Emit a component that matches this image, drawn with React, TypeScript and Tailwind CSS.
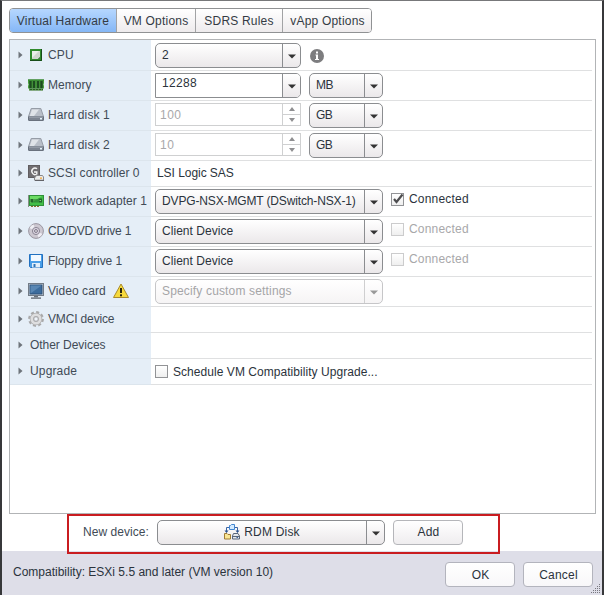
import type { ReactNode } from 'react'
import clsx from 'clsx'

const tabs = [
  { label: 'Virtual Hardware', width: 'w-[107px]', active: true },
  { label: 'VM Options', width: 'w-[79px]' },
  { label: 'SDRS Rules', width: 'w-[87px]' },
  { label: 'vApp Options', width: 'w-[89px]' },
]

function Arrow({ faded }: { faded?: boolean }) {
  return (
    <svg width="8" height="5" viewBox="0 0 8 5" className="block">
      <path d="M0 0.5H8L4 4.5Z" fill={faded ? '#999999' : '#333333'} />
    </svg>
  )
}

function Select({
  children,
  width,
  disabled,
  center,
}: {
  children: ReactNode
  width: string
  disabled?: boolean
  center?: boolean
}) {
  return (
    <div
      className={clsx(
        'flex h-[25px] shrink-0 rounded-[5px] border bg-linear-to-b',
        width,
        disabled
          ? 'border-[#c6c6c8] from-white to-[#f6f4f5] text-[#a5a5a7]'
          : 'border-[#8b8d90] from-white to-[#ebe8ea] text-[#2b333c]'
      )}
    >
      <div className={clsx('flex flex-1 items-center pb-[2px] whitespace-nowrap', center ? 'justify-center gap-1' : 'pl-[6px]')}>
        {children}
      </div>
      <div
        className={clsx(
          'flex w-[18px] items-center justify-center border-l pt-px',
          disabled ? 'border-[#cfcfd0]' : 'border-[#8b8d90]'
        )}
      >
        <Arrow faded={disabled} />
      </div>
    </div>
  )
}

function Spinner({ value }: { value: string }) {
  return (
    <div className="mb-[2px] flex h-[23px] w-[146px] border border-[#cfd0d1] text-[#a8a8aa]">
      <div className="flex flex-1 items-center pl-[4px] tracking-[0.5px]">{value}</div>
      <div className="flex w-[18px] flex-col border-l border-[#cfd0d1]">
        <div className="flex h-[10px] items-center justify-center">
          <svg width="6" height="4" viewBox="0 0 6 4">
            <path d="M0 4H6L3 0Z" fill="#8f8f91" />
          </svg>
        </div>
        <div className="flex h-[11px] items-center justify-center border-t border-[#cfd0d1]">
          <svg width="6" height="4" viewBox="0 0 6 4">
            <path d="M0 0H6L3 4Z" fill="#8f8f91" />
          </svg>
        </div>
      </div>
    </div>
  )
}

function Checkbox({ label, checked, disabled }: { label: ReactNode; checked?: boolean; disabled?: boolean }) {
  return (
    <div className={clsx('flex items-center gap-[5px]', disabled ? 'text-[#a8a8aa]' : 'text-[#2b333c]')}>
      <div
        className={clsx(
          'h-[13px] w-[13px] border bg-linear-to-b from-white to-[#efefef]',
          disabled ? 'border-[#cccccd]' : 'border-[#929396]'
        )}
      >
        {checked && (
          <svg width="12" height="11" viewBox="0 0 12 11" className="block overflow-visible">
            <path d="M2 5L4.5 8L10.5 0.5" fill="none" stroke="#4d4d4f" strokeWidth="2.2" />
          </svg>
        )}
      </div>
      <span className="whitespace-nowrap">{label}</span>
    </div>
  )
}

function Button({ label, light }: { label: string; light?: boolean }) {
  return (
    <button
      className={clsx(
        'flex h-[25px] w-[70px] items-center justify-center rounded-[4px] border bg-linear-to-b from-white tracking-[0.2px] text-[#2b333c]',
        light ? 'border-[#b3b4bd] to-[#f8f7f9] pl-px' : 'border-[#b5b6ba] to-[#efedef] pb-px pl-px'
      )}
    >
      {label}
    </button>
  )
}

function CpuIcon() {
  return (
    <svg width="16" height="16" viewBox="0 0 16 16" className="block">
      <rect x="2" y="2" width="12" height="12" fill="#2f8a2c" />
      <path d="M13.5 2V13.5H2" fill="none" stroke="#174d19" />
      <path d="M4 4H12V10L10 12H4Z" fill="#cfd6ce" />
      <path d="M4 11V4H11Z" fill="#eaeeea" />
      <path d="M12 10V12H10Z" fill="#43794a" />
    </svg>
  )
}

function MemoryIcon() {
  return (
    <svg width="16" height="16" viewBox="0 0 16 16" className="block">
      <path d="M0 2.5H16V6L15.5 7.5L16 9V11.5H0V9L0.5 7.5L0 6Z" fill="#4aa03e" />
      <path d="M0 3H16" stroke="#2d7a2a" />
      <path d="M2.5 4V11M6 4V11M10 4V11M13.5 4V11" stroke="#1d4c20" strokeWidth="2.4" />
      <path d="M1 12.5H15" stroke="#23601f" strokeWidth="2" />
      <path d="M1 13H15" stroke="#8fbd6a" strokeDasharray="1 2" />
    </svg>
  )
}

function DiskIcon() {
  return (
    <svg width="16" height="16" viewBox="0 0 16 16" className="block">
      <path d="M3.2 1.5H12.8L15.5 9.5H0.5Z" fill="#b9bfc8" stroke="#969da7" />
      <path d="M4 2.5H11L6 9H1.8Z" fill="#dfe3e8" />
      <rect x="0.5" y="9.5" width="15" height="4" rx="0.5" fill="#7d8591" stroke="#69717d" />
      <path d="M1 10H15" stroke="#a9b0ba" />
      <rect x="12" y="11" width="2" height="1.5" fill="#e6f5fc" />
    </svg>
  )
}

function ScsiIcon() {
  return (
    <svg width="16" height="16" viewBox="0 0 16 16" className="block">
      <rect x="0.5" y="0.5" width="11" height="12" fill="#716e71" stroke="#605d60" />
      <path d="M9 3.8A3.2 3.2 0 1 0 8.8 9V7H6" fill="none" stroke="#f4f4f4" strokeWidth="1.4" />
      <path d="M8.5 10.5H14.5L15.5 12V15.2H6.5V13Z" fill="#ececec" stroke="#88888b" />
      <path d="M7 15.5H16" stroke="#636368" />
      <rect x="12" y="12.5" width="2" height="1.2" fill="#f2a12c" />
    </svg>
  )
}

function NetworkIcon() {
  return (
    <svg width="16" height="16" viewBox="0 0 16 16" className="block">
      <rect x="1.5" y="2.5" width="14" height="10" fill="#43be48" stroke="#2f9139" />
      <path d="M2 3H14L3 10H2Z" fill="#6cdb65" />
      <path d="M0.5 2V14" stroke="#868e86" />
      <path d="M3 13.5H12" stroke="#86712c" strokeDasharray="2 1" />
      <rect x="2.5" y="6" width="3" height="3.5" fill="#23662c" />
      <path d="M7 6V9.5M9 6V9.5" stroke="#23662c" />
      <rect x="10.5" y="5.5" width="3.5" height="4" fill="#23662c" />
      <path d="M11.5 7.5H13" stroke="#80d77c" />
    </svg>
  )
}

function CdIcon() {
  return (
    <svg width="16" height="16" viewBox="0 0 16 16" className="block">
      <circle cx="8" cy="8" r="7.4" fill="#cdc8d1" stroke="#9a96a1" />
      <path d="M8 8L1.5 5A7 7 0 0 1 5.5 1.6Z" fill="#efeff4" />
      <path d="M8 8L14.5 11A7 7 0 0 1 10.5 14.4Z" fill="#efedf4" />
      <circle cx="8" cy="8" r="3.6" fill="#d9d3df" stroke="#8d8795" />
      <circle cx="8" cy="8" r="1.4" fill="#f7f7f9" stroke="#756d7e" />
    </svg>
  )
}

function FloppyIcon() {
  return (
    <svg width="16" height="16" viewBox="0 0 16 16" className="block">
      <path d="M1.5 1.5H14.5V14.5H2.5L1.5 13.5Z" fill="#4a9fe8" stroke="#2271c0" />
      <rect x="3" y="2" width="10" height="6" fill="#f2f9ff" />
      <rect x="4" y="10" width="8" height="4.5" fill="#e2effa" />
      <rect x="5.5" y="11" width="2" height="3" fill="#2c73b5" />
    </svg>
  )
}

function VideoIcon() {
  return (
    <svg width="16" height="16" viewBox="0 0 16 16" className="block">
      <rect x="0.5" y="0.5" width="15" height="12" fill="#ccd3db" stroke="#737c87" />
      <rect x="2" y="2" width="12" height="9" fill="#3c6c9d" stroke="#2c5079" />
      <path d="M2.5 10.5V2.5H13.5Z" fill="#5987b4" />
      <rect x="6" y="13" width="4" height="1.5" fill="#69727c" />
      <rect x="3" y="14.3" width="10" height="1.7" fill="#7d858f" />
    </svg>
  )
}

function GearIcon() {
  return (
    <svg width="16" height="16" viewBox="0 0 16 16" className="block">
      <circle cx="8" cy="8" r="6.6" fill="none" stroke="#a8a8a9" strokeWidth="2.6" strokeDasharray="2.9 2.28" />
      <circle cx="8" cy="8" r="4.2" fill="none" stroke="#b0b0b1" strokeWidth="4.2" />
      <circle cx="8" cy="8" r="4.2" fill="none" stroke="#dededf" strokeWidth="2.6" />
      <circle cx="8" cy="8" r="2.2" fill="#eef3f9" stroke="#a0a0a2" strokeWidth="0.8" />
    </svg>
  )
}

function WarningIcon() {
  return (
    <svg width="16" height="16" viewBox="0 0 16 16" className="block">
      <path d="M8 1L15.5 14.5H0.5Z" fill="#f7da3c" stroke="#a98b2c" strokeLinejoin="round" />
      <path d="M8 5V10" stroke="#2b270d" strokeWidth="2" />
      <rect x="7" y="11.3" width="2" height="2" fill="#2b270d" />
    </svg>
  )
}

function RdmIcon() {
  return (
    <svg width="16" height="16" viewBox="0 0 16 16" className="block">
      <path d="M5 3.5H2.5V8M11 3.5H13.5V8" fill="none" stroke="#3965a5" />
      <path d="M0.5 6.5H4.5L2.5 9ZM11.5 6.5H15.5L13.5 9Z" fill="#2a508c" />
      <path d="M5.5 1.5H6.5L7.5 0.5H10.5V5.5H5.5Z" fill="#d5ebff" stroke="#4387d2" />
      <path d="M0.5 9.5H3L4 10.5H6.5V15H0.5Z" fill="#fae694" stroke="#a17c34" />
      <path d="M9.5 9.5H14L15.5 12V15H8.5V12Z" fill="#e3e7ec" stroke="#59657a" />
      <path d="M9 12.5H15" stroke="#59657a" />
      <rect x="12.5" y="13" width="1.5" height="1" fill="#3965a5" />
    </svg>
  )
}

function InfoIcon() {
  return (
    <svg width="14" height="14" viewBox="0 0 14 14" className="block">
      <circle cx="7" cy="7" r="7" fill="#7d7d7f" />
      <path d="M5.5 5.5H8V10H9V11H5V10H6V6.5H5.5Z" fill="#ffffff" />
      <rect x="6" y="2.5" width="2" height="2" fill="#ffffff" />
    </svg>
  )
}

function Row({
  label,
  icon,
  extra,
  height,
  first,
  tracking,
  children,
}: {
  label: string
  icon?: ReactNode
  extra?: ReactNode
  height: string
  first?: boolean
  tracking?: string
  children?: ReactNode
}) {
  return (
    <div className={clsx('flex', height)}>
      <div
        className={clsx(
          'flex w-[141px] shrink-0 items-center border-b border-[#dce5ed] bg-[#e5eef7] pl-2 text-[#414b56]',
          first ? 'pb-px' : 'pb-[2px]'
        )}
      >
        <svg width="5" height="8" viewBox="0 0 5 8" className="shrink-0">
          <path d="M0.5 0.5V7.5L4.5 4Z" fill="#6e747b" />
        </svg>
        {icon && <span className="ml-[5px] w-4 shrink-0">{icon}</span>}
        <span className={clsx('whitespace-nowrap', icon ? 'ml-[4px]' : 'ml-[7px]', tracking)}>{label}</span>
        {extra}
      </div>
      <div className={clsx('mr-[3px] flex flex-1 items-center border-b border-[#dfe0e1] pl-[4px]', first && 'pt-px')}>
        {children}
      </div>
    </div>
  )
}

export default function App() {
  return (
    <div className="relative flex h-[595px] w-[604px] flex-col overflow-hidden border-t border-r-2 border-l-2 border-t-[#77787a] border-r-[#37383a] border-l-[#37383a] bg-white font-['Liberation_Sans',Arial,sans-serif] text-[12px] leading-[14px] tracking-[0.05px]">
      {/* Tabs */}
      <div className="mt-[7px] ml-[7px] flex h-[25px] w-[363px] overflow-hidden rounded-[4px] border border-[#909294] tracking-[0.2px]">
        {tabs.map((tab) => (
          <div
            key={tab.label}
            className={clsx(
              'flex shrink-0 items-center justify-center border-r border-[#a2a3a5] bg-linear-to-b whitespace-nowrap text-[#343b44] last:border-r-0',
              tab.width,
              tab.active ? 'from-[#b6d7ff] to-[#85b7f6]' : 'from-white to-[#eeebed]'
            )}
          >
            {tab.label}
          </div>
        ))}
      </div>

      {/* Hardware list */}
      <div className="mt-[6px] ml-[7px] h-[475px] w-[587px] border border-[#b2b4b6]">
        <Row label="CPU" icon={<CpuIcon />} height="h-[31px]" tracking="tracking-[0.2px]" first>
          <Select width="w-[146px]">2</Select>
          <span className="ml-[9px]">
            <InfoIcon />
          </span>
        </Row>
        <Row label="Memory" icon={<MemoryIcon />} height="h-[30px]">
          <div className="flex h-[25px] w-[146px] rounded-r-[5px] border border-[#8b8d90] bg-white text-[#2b333c]">
            <div className="flex flex-1 items-center pb-[5px] pl-[6px] tracking-[0.35px]">12288</div>
            <div className="flex w-[18px] items-center justify-center rounded-r-[4px] border-l border-[#8b8d90] bg-linear-to-b from-white to-[#ebe8ea] pt-px">
              <Arrow />
            </div>
          </div>
          <div className="ml-2">
            <Select width="w-[74px]">
              <span className="tracking-[-0.5px]">MB</span>
            </Select>
          </div>
        </Row>
        <Row label="Hard disk 1" icon={<DiskIcon />} height="h-[30px]" tracking="tracking-[0.1px]">
          <Spinner value="100" />
          <div className="ml-2">
            <Select width="w-[74px]">
              <span className="tracking-[-0.5px]">GB</span>
            </Select>
          </div>
        </Row>
        <Row label="Hard disk 2" icon={<DiskIcon />} height="h-[30px]" tracking="tracking-[0.1px]">
          <Spinner value="10" />
          <div className="ml-2">
            <Select width="w-[74px]">
              <span className="tracking-[-0.5px]">GB</span>
            </Select>
          </div>
        </Row>
        <Row label="SCSI controller 0" icon={<ScsiIcon />} height="h-[26px]">
          <span className="pb-[2px] pl-[2px] tracking-[-0.05px] text-[#2b333c]">LSI Logic SAS</span>
        </Row>
        <Row label="Network adapter 1" icon={<NetworkIcon />} height="h-[30px]">
          <Select width="w-[228px]">
            <span className="tracking-[-0.14px]">DVPG-NSX-MGMT (DSwitch-NSX-1)</span>
          </Select>
          <div className="mb-[5px] ml-2 tracking-[0.2px]">
            <Checkbox label="Connected" checked />
          </div>
        </Row>
        <Row label="CD/DVD drive 1" icon={<CdIcon />} height="h-[30px]" tracking="tracking-[-0.15px]">
          <Select width="w-[228px]">Client Device</Select>
          <div className="mb-[5px] ml-2 tracking-[0.2px]">
            <Checkbox label="Connected" disabled />
          </div>
        </Row>
        <Row label="Floppy drive 1" icon={<FloppyIcon />} height="h-[30px]" tracking="tracking-[-0.1px]">
          <Select width="w-[228px]">Client Device</Select>
          <div className="mb-[5px] ml-2 tracking-[0.2px]">
            <Checkbox label="Connected" disabled />
          </div>
        </Row>
        <Row
          label="Video card"
          icon={<VideoIcon />}
          extra={
            <span className="ml-[7px]">
              <WarningIcon />
            </span>
          }
          height="h-[30px]"
        >
          <Select width="w-[228px]" disabled>
            <span className="tracking-[0.16px]">Specify custom settings</span>
          </Select>
        </Row>
        <Row label="VMCI device" icon={<GearIcon />} height="h-[26px]" tracking="tracking-[-0.15px]" />
        <Row label="Other Devices" height="h-[26px]" tracking="tracking-[-0.04px]" />
        <Row label="Upgrade" height="h-[26px]" tracking="tracking-[0.15px]">
          <Checkbox label="Schedule VM Compatibility Upgrade..." />
        </Row>
      </div>

      {/* New device */}
      <div className="flex h-[37px] items-center pl-[81px]">
        <span className="w-[74px] pb-[2px] whitespace-nowrap text-[#414b56]">New device:</span>
        <Select width="w-[228px]" center>
          <RdmIcon />
          <span className="tracking-[0.2px]">RDM Disk</span>
        </Select>
        <div className="ml-2">
          <Button label="Add" />
        </div>
      </div>

      {/* Footer */}
      <div className="flex flex-1 items-start justify-between bg-[#dedee8] pr-[9px] pl-[11px]">
        <span className="pt-[14px] tracking-[0px] text-[#2b333c]">Compatibility: ESXi 5.5 and later (VM version 10)</span>
        <div className="flex gap-2 pt-[11px]">
          <Button label="OK" light />
          <Button label="Cancel" light />
        </div>
      </div>

      {/* Resize grip */}
      <svg width="10" height="10" viewBox="0 0 10 10" className="absolute right-[1px] bottom-[1px]">
        <path d="M8.5 0V10M6.5 2V10M4.5 4V10M2.5 6V10M0.5 8V10" stroke="#77777f" strokeDasharray="1 1" />
      </svg>

      {/* Highlight around the new device controls */}
      <div className="absolute top-[513px] left-[65px] h-[40px] w-[433px] border-2 border-[#c91c20]" />
    </div>
  )
}
